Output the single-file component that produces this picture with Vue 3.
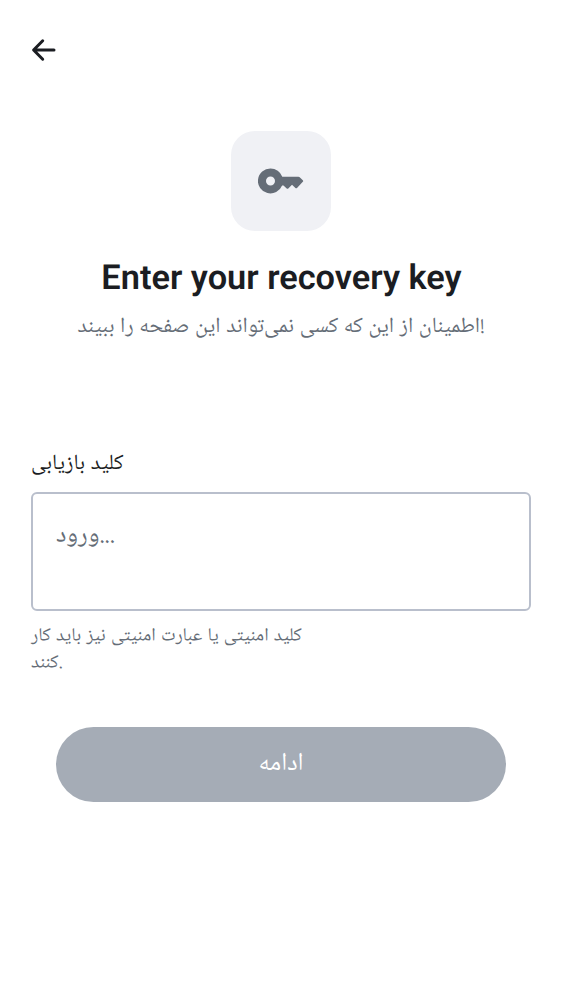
<script setup>
</script>

<template>
  <main class="screen">
    <header class="bar">
      <button class="back" aria-label="Back">
        <svg width="25" height="24" viewBox="0 0 25 24" fill="none" stroke="#1b1d22" stroke-width="3" stroke-linecap="round" stroke-linejoin="round">
          <path d="M11.700 2.800 2.600 12l9.100 9.200M3 12H23" />
        </svg>
      </button>
    </header>
    <section class="intro">
      <div class="tile">
        <svg width="46" height="26" viewBox="0 0 46 26">
          <path fill="#656d77" fill-rule="evenodd" d="M12.500.500a12.500 12.500 0 0 1 11.800 8.300H40.500Q41.200 8.800 41.700 9.300L44.800 12.200Q45.600 13 44.800 13.800L39 19.900Q38.200 20.700 37.400 19.900L34 16.800 30.300 20.400Q29.500 21.200 28.700 20.400L25.500 17.500H24.100A12.500 12.500 0 1 1 12.500.500Zm0 8a4.500 4.500 0 1 0 0 9 4.500 4.500 0 0 0 0-9Z" />
        </svg>
      </div>
      <h1>Enter your recovery key</h1>
      <p class="subtitle">اطمینان از این که کسی نمی‌تواند این صفحه را ببیند!</p>
    </section>
    <section class="field">
      <label>کلید بازیابی</label>
      <div class="input">ورود...</div>
      <p class="hint">کلید امنیتی یا عبارت امنیتی نیز باید کار<br />کنند.</p>
    </section>
    <button class="submit">ادامه</button>
  </main>
</template>

<style scoped>
.screen { box-sizing: border-box; height: 1000px; padding: 38px 31px 0; background: #fff; color: #1b1d22; font-family: "Noto Naskh Arabic UI", "Noto Naskh Arabic", "DejaVu Sans", sans-serif; text-rendering: geometricPrecision; }
.bar { height: 93px; }
.back { display: block; padding: 0; border: 0; background: none; }
.back svg { display: block; }
.intro { display: flex; flex-direction: column; align-items: center; }
.tile { display: flex; align-items: center; justify-content: center; width: 100px; height: 100px; border-radius: 24px; background: #f0f1f5; }
h1 { margin: 26px 0 0; padding-left: 1px; font-family: Roboto, sans-serif; font-size: 34.375px; line-height: 43px; font-weight: 600; white-space: nowrap; }
.subtitle { margin: 14px 0 0; height: 28px; font-size: 21.875px; line-height: 28px; color: #656d77; white-space: nowrap; word-spacing: .8px; }
.field { margin-top: 109px; }
label { display: block; height: 28px; font-size: 21.875px; line-height: 28px; word-spacing: 1px; }
.input { box-sizing: border-box; height: 119px; margin-top: 13px; padding: 26px 23px; border: 2px solid #b9bfcc; border-radius: 6px; font-size: 25px; line-height: 32px; color: #656d77; }
.hint { margin: 12px 0 0; font-size: 18.750px; line-height: 27px; color: #656d77; white-space: nowrap; word-spacing: 1px; }
.submit { display: block; width: 450px; height: 75px; margin: 49.500px auto 0; padding: 0 0 2px; border: 0; border-radius: 38px; background: #a5acb6; color: #fff; font-family: inherit; font-size: 25px; line-height: 32px; }
</style>
